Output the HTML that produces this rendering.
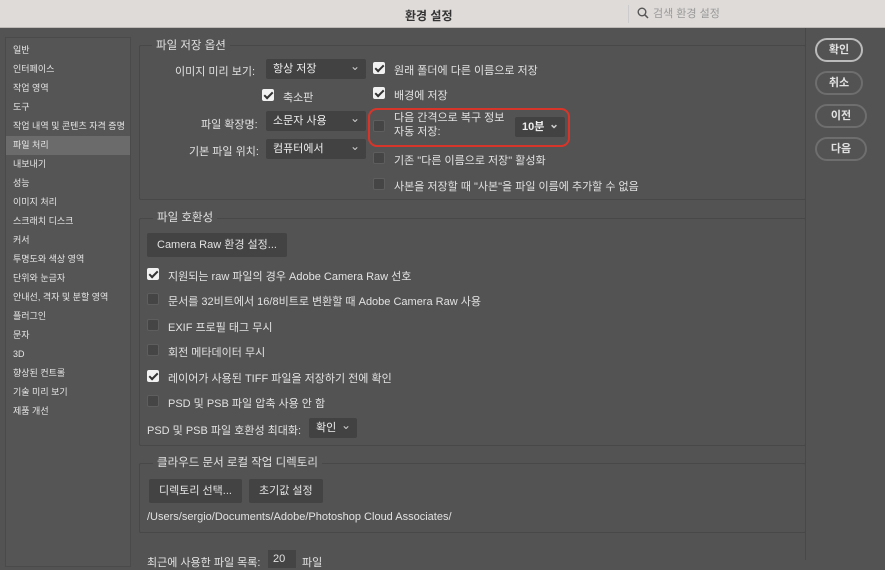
<!DOCTYPE html>
<html><head><meta charset="utf-8"><style>
*{box-sizing:border-box;margin:0;padding:0}
body{width:885px;height:560px;overflow:hidden;background:#535353;font-family:"Liberation Sans","Noto Sans CJK KR",sans-serif;color:#e2e2e2;font-size:11px;position:relative}
.a{position:absolute;white-space:nowrap}
.title{left:0;top:0;width:885px;height:28px;background:#dfdbd9;border-bottom:1px solid #bdb9b7}
.side{left:5px;top:37px;width:126px;height:530px;border:1px solid #4a4a4a;background:#555}
.side div{height:19px;line-height:19px;padding-left:7px;font-size:9px;color:#e6e6e6}
.side .sel{background:#6b6b6b}
.box{border:1px solid #484848;border-radius:2px}
.lg{background:#535353;padding:0 4px;font-size:11.5px}
.sel2{background:#424242;height:20px;line-height:20px;padding-left:7px;font-size:11px;color:#eee;border-radius:2px}
.sel2:after{content:"⌄";position:absolute;right:6px;top:-3px;font-size:12px;color:#ccc}
.cb{width:12px;height:12px;border-radius:2px;background:#454545;border:1px solid #5e5e5e}
.ck{background:#f1f1f1;border-color:#f1f1f1}
.ck:after{content:"";position:absolute;left:3px;top:0px;width:3px;height:7px;border:solid #333;border-width:0 2px 2px 0;transform:rotate(45deg)}
.btn{background:#434343;height:24px;line-height:24px;padding:0 10px;font-size:11px;border-radius:2px}
.rb{width:48px;height:24px;border:2px solid #6e6e6e;border-radius:12px;text-align:center;line-height:20px;font-size:11px;font-weight:bold}
</style></head><body>
<div class="a title"></div>
<div class="a" style="left:405px;top:7px;color:#333;font-size:12px;font-weight:bold">환경 설정</div>
<div class="a" style="left:628px;top:5px;width:257px;height:18px;border-left:1px solid #ccc;color:#999;font-size:11px;line-height:18px;padding-left:8px">
<svg width="12" height="12" style="vertical-align:-2px;margin-right:4px"><circle cx="5" cy="5" r="3.8" fill="none" stroke="#555" stroke-width="1.4"/><line x1="7.8" y1="7.8" x2="11" y2="11" stroke="#555" stroke-width="1.5"/></svg>검색 환경 설정</div>

<div class="a side">
<div style="margin-top:3px">일반</div><div>인터페이스</div><div>작업 영역</div><div>도구</div><div>작업 내역 및 콘텐츠 자격 증명</div><div class="sel">파일 처리</div><div>내보내기</div><div>성능</div><div>이미지 처리</div><div>스크래치 디스크</div><div>커서</div><div>투명도와 색상 영역</div><div>단위와 눈금자</div><div>안내선, 격자 및 분할 영역</div><div>플러그인</div><div>문자</div><div>3D</div><div>향상된 컨트롤</div><div>기술 미리 보기</div><div>제품 개선</div>
</div>

<div class="a" style="left:805px;top:28px;width:1px;height:532px;background:#484848"></div>
<div class="a rb" style="left:815px;top:38px;border-color:#bbb">확인</div>
<div class="a rb" style="left:815px;top:71px">취소</div>
<div class="a rb" style="left:815px;top:104px;width:52px">이전</div>
<div class="a rb" style="left:815px;top:137px;width:52px">다음</div>

<div class="a box" style="left:139px;top:45px;width:667px;height:155px"></div>
<div class="a lg" style="left:152px;top:37px">파일 저장 옵션</div>
<div class="a" style="left:175px;top:63px">이미지 미리 보기:</div>
<div class="a sel2" style="left:266px;top:59px;width:100px;line-height:21px">항상 저장</div>
<div class="a cb ck" style="left:262px;top:89px"></div><div class="a" style="left:283px;top:89px">축소판</div>
<div class="a" style="left:201px;top:116px">파일 확장명:</div>
<div class="a sel2" style="left:266px;top:111px;width:100px;line-height:21px">소문자 사용</div>
<div class="a" style="left:189px;top:143px">기본 파일 위치:</div>
<div class="a sel2" style="left:266px;top:139px;width:100px;line-height:21px">컴퓨터에서</div>
<div class="a cb ck" style="left:373px;top:62px"></div><div class="a" style="left:394px;top:62px">원래 폴더에 다른 이름으로 저장</div>
<div class="a cb ck" style="left:373px;top:87px"></div><div class="a" style="left:394px;top:87px">배경에 저장</div>
<div class="a" style="left:368px;top:108px;width:202px;height:39px;border:2.5px solid #d8352a;border-radius:9px"></div>
<div class="a cb" style="left:373px;top:120px"></div>
<div class="a" style="left:394px;top:111px;line-height:14px">다음 간격으로 복구 정보<br>자동 저장:</div>
<div class="a sel2" style="left:515px;top:117px;width:50px;font-weight:bold;line-height:21px">10분</div>
<div class="a cb" style="left:373px;top:152px"></div><div class="a" style="left:394px;top:152px">기존 "다른 이름으로 저장" 활성화</div>
<div class="a cb" style="left:373px;top:178px"></div><div class="a" style="left:394px;top:178px">사본을 저장할 때 "사본"을 파일 이름에 추가할 수 없음</div>

<div class="a box" style="left:139px;top:218px;width:667px;height:228px"></div>
<div class="a lg" style="left:153px;top:209px">파일 호환성</div>
<div class="a btn" style="left:147px;top:233px">Camera Raw 환경 설정...</div>
<div class="a cb ck" style="left:147px;top:268px"></div><div class="a" style="left:168px;top:268px">지원되는 raw 파일의 경우 Adobe Camera Raw 선호</div>
<div class="a cb" style="left:147px;top:293px"></div><div class="a" style="left:168px;top:293px">문서를 32비트에서 16/8비트로 변환할 때 Adobe Camera Raw 사용</div>
<div class="a cb" style="left:147px;top:319px"></div><div class="a" style="left:168px;top:319px">EXIF 프로필 태그 무시</div>
<div class="a cb" style="left:147px;top:344px"></div><div class="a" style="left:168px;top:344px">회전 메타데이터 무시</div>
<div class="a cb ck" style="left:147px;top:370px"></div><div class="a" style="left:168px;top:370px">레이어가 사용된 TIFF 파일을 저장하기 전에 확인</div>
<div class="a cb" style="left:147px;top:395px"></div><div class="a" style="left:168px;top:395px">PSD 및 PSB 파일 압축 사용 안 함</div>
<div class="a" style="left:147px;top:422px">PSD 및 PSB 파일 호환성 최대화:</div>
<div class="a sel2" style="left:309px;top:418px;width:48px;line-height:21px">확인</div>

<div class="a box" style="left:139px;top:463px;width:667px;height:70px"></div>
<div class="a lg" style="left:153px;top:454px">클라우드 문서 로컬 작업 디렉토리</div>
<div class="a btn" style="left:149px;top:479px">디렉토리 선택...</div>
<div class="a btn" style="left:249px;top:479px">초기값 설정</div>
<div class="a" style="left:147px;top:511px">/Users/sergio/Documents/Adobe/Photoshop Cloud Associates/</div>
<div class="a" style="left:147px;top:554px">최근에 사용한 파일 목록:</div>
<div class="a" style="left:268px;top:550px;width:28px;height:18px;background:#444;padding-left:5px;line-height:18px">20</div>
<div class="a" style="left:302px;top:554px">파일</div>
</body></html>
